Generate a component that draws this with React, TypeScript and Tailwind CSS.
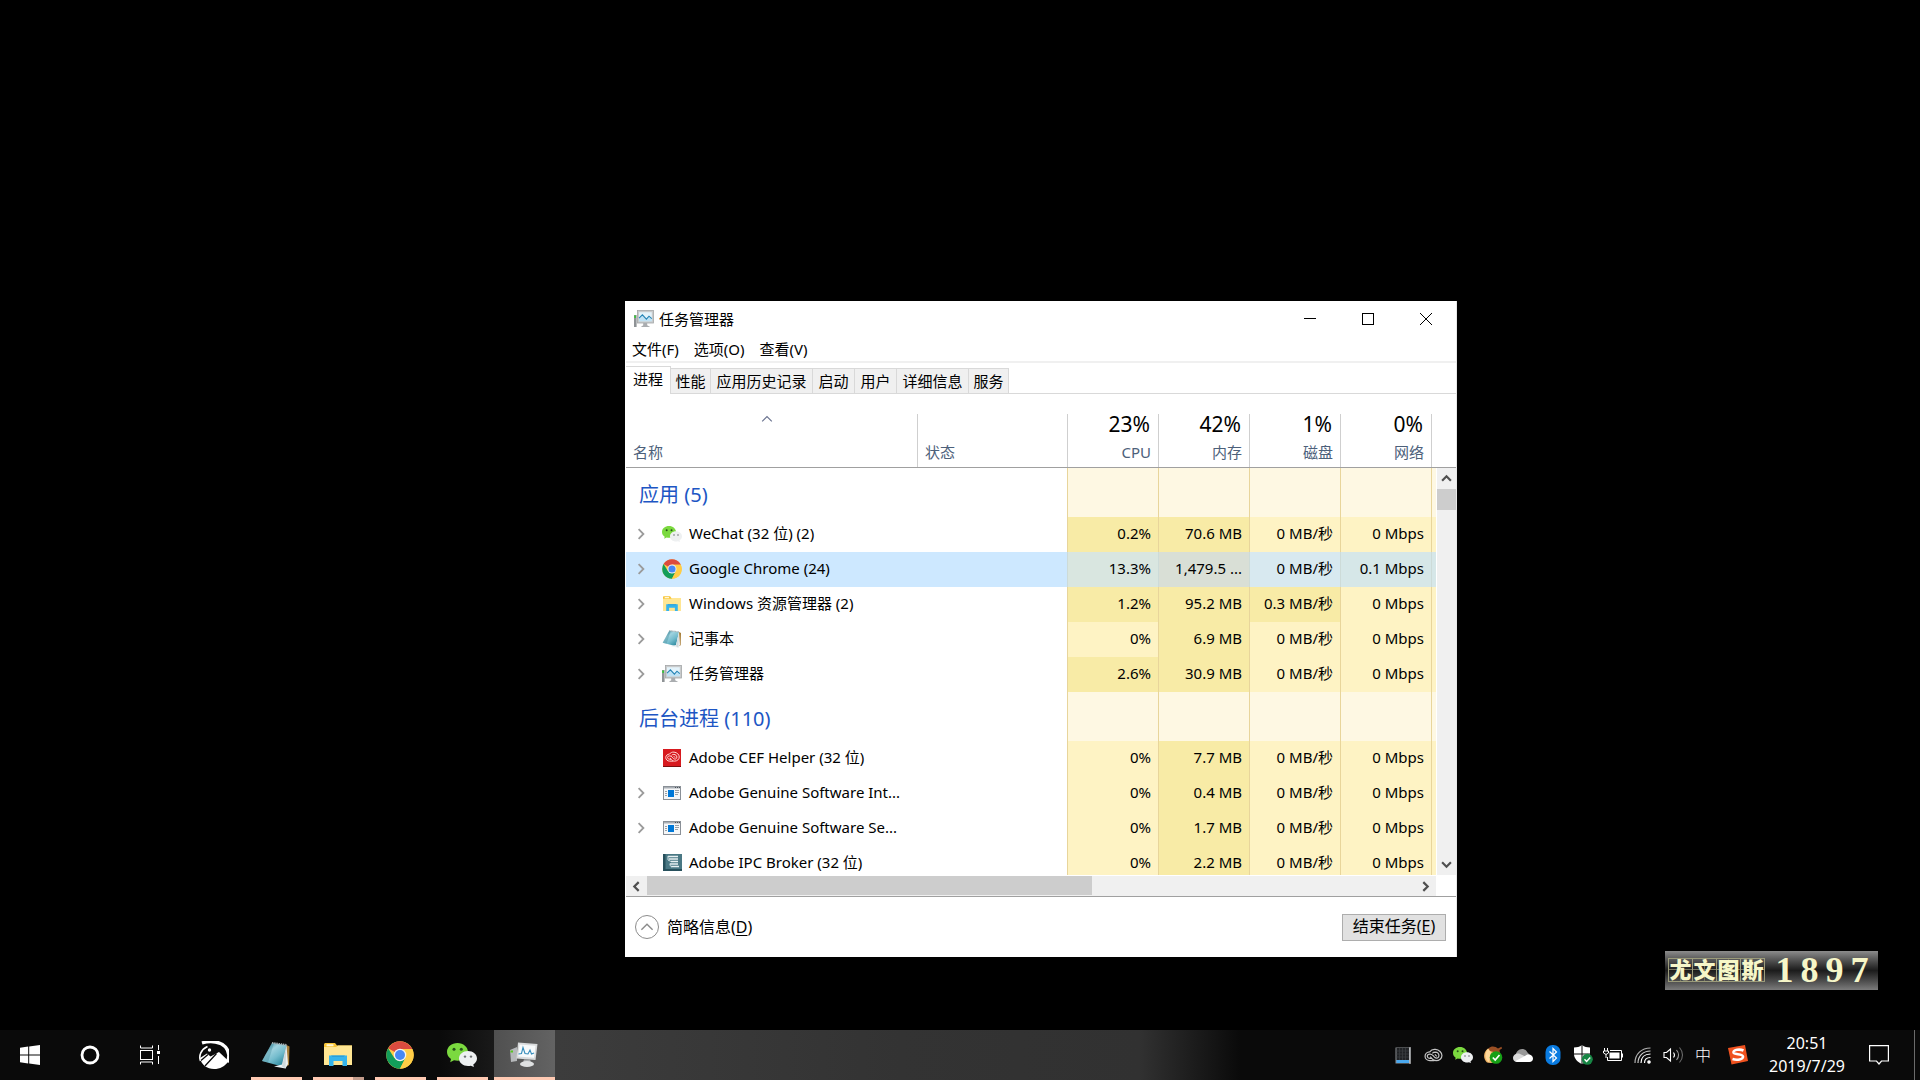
import React, { useState } from "react";

const UI_FONT = "font-['Noto_Sans','Noto_Sans_CJK_SC',sans-serif]";

type Heat = "low" | "high";

interface ProcessRow {
  name: string;
  icon: React.ReactNode;
  expandable: boolean;
  values: string[];
  heat: Heat[];
}

interface ProcessGroup {
  title: string;
  rows: ProcessRow[];
}

/* ---------- icons ---------- */

const TaskManagerIcon = ({ className }: { className?: string }) => (
  <svg viewBox="0 0 20 18" className={className} aria-hidden="true">
    <rect x="0" y="5" width="2.6" height="12" fill="#8f9396" />
    <rect x="0.2" y="5.5" width="1.8" height="2.4" fill="#39c739" />
    <rect x="3.4" y="0.5" width="16" height="12.5" fill="#c9cbcc" stroke="#a2a5a7" strokeWidth="0.8" />
    <rect x="5" y="2.2" width="12.800" height="9" fill="#e4f3fb" />
    <path d="M5 8.2 8.4 4.8 12.4 9.2 15 6.2 17.8 8.6V11.2H5Z" fill="#bfe2f5" />
    <path d="M5 8.2 8.4 4.8 12.4 9.2 15 6.2 17.8 8.6" fill="none" stroke="#2584b5" strokeWidth="1.1" />
    <path d="M9.2 13h4v2.2l3 1.9H6.8l2.4-1.9Z" fill="#aaadb0" />
  </svg>
);

const WeChatIcon = ({ className }: { className?: string }) => (
  <svg viewBox="0 0 30 24" className={className} aria-hidden="true">
    <path d="M10.5 0C4.7 0 0 3.8 0 9c0 2.900 1.500 5.300 4 7l-.8 3.200 3.800-2c1.100.3 2.300.5 3.500.5C16.300 17.700 21 14 21 9S16.300 0 10.500 0Z" fill="#7bd93f" />
    <circle cx="7" cy="6.300" r="1.500" fill="#24501a" />
    <circle cx="14.300" cy="6.300" r="1.500" fill="#24501a" />
    <path d="M21 8c-5 0-9 3.300-9 7.600s4 7.500 9 7.500c1 0 2-.1 2.900-.4l3 1.300-.6-2.600c2.300-1.400 3.700-3.500 3.700-5.800C30 11.300 26 8 21 8Z" fill="#eef0f1" />
    <circle cx="18" cy="13.600" r="1.200" fill="#6d7173" />
    <circle cx="24" cy="13.600" r="1.200" fill="#6d7173" />
  </svg>
);

const ChromeIcon = ({ className }: { className?: string }) => (
  <svg viewBox="0 0 48 48" className={className} aria-hidden="true">
    <circle cx="24" cy="24" r="23.500" fill="#ffcd46" />
    <path d="M24 24 3.650 12.250A23.500 23.500 0 0 1 44.350 12.250L45 13.500H24Z" fill="#db4b3f" />
    <path d="M3.650 12.250A23.500 23.500 0 0 0 24 47.500L33.500 29.500 24 24 14.500 29.500Z" fill="#129d5a" />
    <path d="M24 13.500h21A23.500 23.500 0 0 1 24 47.500L33.100 29.250Z" fill="#ffcd46" />
    <circle cx="24" cy="24" r="10.700" fill="#f3f4f5" />
    <circle cx="24" cy="24" r="8.600" fill="#4688f4" />
  </svg>
);

const ExplorerIcon = ({ className }: { className?: string }) => (
  <svg viewBox="0 0 28 24" className={className} aria-hidden="true">
    <path d="M0 1.500C0 .7.700 0 1.500 0h9.500l2 2.500h15V22H0Z" fill="#f8c537" />
    <rect x="2.500" y="1.200" width="7" height="2" rx="0.500" fill="#fff7d8" />
    <path d="M0 4h12l2-1.500h14V22H0Z" fill="#ffe693" />
    <path d="M5 12.500h18V23h-4.500v-5h-9v5H5Z" fill="#35b4ec" />
    <path d="M7 12.500h14l-1.500 1.500h-11Z" fill="#2b9fd9" />
  </svg>
);

const NotepadIcon = ({ className }: { className?: string }) => (
  <svg viewBox="0 0 28 27" className={className} aria-hidden="true">
    <defs>
      <linearGradient id="pad" x1="0" y1="0.100" x2="0.700" y2="1">
        <stop offset="0" stopColor="#2f8296" />
        <stop offset="0.350" stopColor="#9fd3df" />
        <stop offset="0.650" stopColor="#74bccd" />
        <stop offset="1" stopColor="#2f8ba0" />
      </linearGradient>
    </defs>
    <path d="M24.500 3 27.500 4.500 27 23l-4 2Z" fill="#a87f3a" />
    <path d="M10 1 24.500 3 20 24.500 0 19Z" fill="url(#pad)" />
    <path d="M10 1 0 19 6 20.600 12 1.300Z" fill="#3d8496" opacity="0.350" />
    <path d="M24.500 3 26 22 23.500 26.500 12 24.500 20 22.500Z" fill="#eef2f4" />
    <path d="M24.500 3 20 24.500 23.500 26.500Z" fill="#cfdadd" />
    <path d="M10 1 25 3" stroke="#a5b0b4" strokeWidth="2" strokeDasharray="1.400 0.800" />
  </svg>
);

const CreativeCloudGlyph = ({ className }: { className?: string }) => (
  <svg viewBox="0 0 20 16" className={className} fill="none" stroke="currentColor" aria-hidden="true">
    <path d="M11 13.500H6.200C3.300 13.500 1 11.400 1 8.800 1 6.200 3.200 4.200 6 4.100 7.200 2.300 9.500 1.200 12 1.500c4 .4 7 3.200 7 6.500 0 3.200-2.800 5.500-6.300 5.500-2 0-3.200-.8-4.700-2.500L6.500 9.200" strokeWidth="1.300" />
    <path d="M8.500 11H6.300C4.700 11 3.400 10 3.400 8.700c0-1.300 1.300-2.200 2.900-2.200 1.500 0 2.300.6 3.300 1.700l1.900 2c1.600 1.300 4.300.5 4.300-1.900 0-2.300-1.800-3.700-4-3.800-1.300 0-2.300.4-3 1.300" strokeWidth="1.300" />
    <path d="M13.500 9 11.500 6.700" strokeWidth="1.200" />
  </svg>
);

const AdobeCefIcon = () => (
  <span className="flex size-[18px] items-center justify-center border-b border-[#7d0e0e] bg-[#d71a1f]">
    <CreativeCloudGlyph className="h-3 w-[15px] text-[#ffd9d6]" />
  </span>
);

const GenericAppIcon = () => (
  <svg viewBox="0 0 18 14" className="h-[14px] w-[18px]" aria-hidden="true">
    <rect x="0.500" y="0.500" width="17" height="13" fill="#f6f7f8" stroke="#8a9097" />
    <rect x="1" y="1" width="16" height="1.500" fill="#a9afb5" />
    <path d="M12 1.500h1M14 1.500h1M16 1.500h1" stroke="#4c5258" />
    <rect x="5" y="4" width="6" height="7" fill="#0078d7" />
    <path d="M2 5.500h2M2 7.500h2M2 9.500h2M12 4.500h4M12 6.500h4M12 8.500h3" stroke="#9aa0a6" />
  </svg>
);

const IpcBrokerIcon = () => (
  <svg viewBox="0 0 19 17" className="h-[17px] w-[19px]" aria-hidden="true">
    <rect width="19" height="17" fill="#4a7884" />
    <rect width="2.500" height="17" fill="#27505c" />
    <rect y="15" width="19" height="2" fill="#27505c" />
    <path d="M5 2.500h10M6 5h9M8 7.500h7M7 10h8M8 12.500h8" stroke="#e7f0f2" strokeWidth="1.400" />
    <path d="M5 2v4l3 1.500M7 9.500v2l2 1.500" stroke="#cfe0e4" fill="none" />
  </svg>
);

const Chevron = ({ d, className }: { d: string; className?: string }) => (
  <svg viewBox="0 0 10 10" className={className} fill="none" stroke="currentColor" aria-hidden="true">
    <path d={d} />
  </svg>
);

const UP = "M1 7 5 3 9 7";
const DOWN = "M1 3 5 7 9 3";
const LEFT = "M7 1 3 5 7 9";
const RIGHT = "M3 1 7 5 3 9";

/* ---------- data ---------- */

const menus = ["文件(F)", "选项(O)", "查看(V)"];

const tabs = [
  { label: "性能", width: "w-10" },
  { label: "应用历史记录", width: "w-[102px]" },
  { label: "启动", width: "w-[42px]" },
  { label: "用户", width: "w-[42px]" },
  { label: "详细信息", width: "w-[72px]" },
  { label: "服务", width: "w-10" },
];

const usage = [
  { total: "23%", label: "CPU" },
  { total: "42%", label: "内存" },
  { total: "1%", label: "磁盘" },
  { total: "0%", label: "网络" },
];

const groups: ProcessGroup[] = [
  {
    title: "应用 (5)",
    rows: [
      {
        name: "WeChat (32 位) (2)",
        icon: <WeChatIcon className="h-4 w-5" />,
        expandable: true,
        values: ["0.2%", "70.6 MB", "0 MB/秒", "0 Mbps"],
        heat: ["high", "high", "low", "low"],
      },
      {
        name: "Google Chrome (24)",
        icon: <ChromeIcon className="size-5" />,
        expandable: true,
        values: ["13.3%", "1,479.5 ...", "0 MB/秒", "0.1 Mbps"],
        heat: ["high", "high", "low", "low"],
      },
      {
        name: "Windows 资源管理器 (2)",
        icon: <ExplorerIcon className="h-4 w-[18px]" />,
        expandable: true,
        values: ["1.2%", "95.2 MB", "0.3 MB/秒", "0 Mbps"],
        heat: ["high", "high", "high", "low"],
      },
      {
        name: "记事本",
        icon: <NotepadIcon className="h-[18px] w-5" />,
        expandable: true,
        values: ["0%", "6.9 MB", "0 MB/秒", "0 Mbps"],
        heat: ["low", "high", "low", "low"],
      },
      {
        name: "任务管理器",
        icon: <TaskManagerIcon className="h-[18px] w-5" />,
        expandable: true,
        values: ["2.6%", "30.9 MB", "0 MB/秒", "0 Mbps"],
        heat: ["high", "high", "low", "low"],
      },
    ],
  },
  {
    title: "后台进程 (110)",
    rows: [
      {
        name: "Adobe CEF Helper (32 位)",
        icon: <AdobeCefIcon />,
        expandable: false,
        values: ["0%", "7.7 MB", "0 MB/秒", "0 Mbps"],
        heat: ["low", "high", "low", "low"],
      },
      {
        name: "Adobe Genuine Software Int...",
        icon: <GenericAppIcon />,
        expandable: true,
        values: ["0%", "0.4 MB", "0 MB/秒", "0 Mbps"],
        heat: ["low", "high", "low", "low"],
      },
      {
        name: "Adobe Genuine Software Se...",
        icon: <GenericAppIcon />,
        expandable: true,
        values: ["0%", "1.7 MB", "0 MB/秒", "0 Mbps"],
        heat: ["low", "high", "low", "low"],
      },
      {
        name: "Adobe IPC Broker (32 位)",
        icon: <IpcBrokerIcon />,
        expandable: false,
        values: ["0%", "2.2 MB", "0 MB/秒", "0 Mbps"],
        heat: ["low", "high", "low", "low"],
      },
    ],
  },
];

const heatColors = { low: "bg-[#fef3c4]", high: "bg-[#f8eba6]" };
// tint of each column once the row is selected
const selectedColors = ["bg-[#d9e6e0]", "bg-[#d9dfd6]", "bg-[#d8e9f0]", "bg-[#d6e7e8]"];

/* ---------- process table ---------- */

function ProcessTable() {
  const [selected, setSelected] = useState("Google Chrome (24)");

  return (
    <div className="h-[481px] min-w-0 flex-1 overflow-hidden">
      <table className="w-full table-fixed border-separate border-spacing-0">
        <colgroup>
          <col />
          <col className="w-[150px]" />
          <col className="w-[91px]" />
          <col className="w-[91px]" />
          <col className="w-[91px]" />
          <col className="w-[91px]" />
          <col className="w-[5px]" />
        </colgroup>
        <thead>
          <tr className="text-[#4c607a]">
            <th className="border-b border-[#a0a0a0] p-0 pt-5 text-left font-normal">
              <div className="flex h-[53px] flex-col justify-between pb-[5px] pl-[7px]">
                <Chevron d={UP} className="-mt-px ml-32 size-3 text-[#6a7390]" />
                <span className="leading-5">名称</span>
              </div>
            </th>
            <th className="border-b border-[#a0a0a0] p-0 pt-5 text-left font-normal">
              <div className="flex h-[53px] flex-col justify-end border-l border-[#cfcfcf] pb-[5px] pl-[7px]">
                <span className="leading-5">状态</span>
              </div>
            </th>
            {usage.map((u) => (
              <th key={u.label} className="border-b border-[#a0a0a0] p-0 pt-5 text-right font-normal">
                <div className="flex h-[53px] flex-col justify-between border-l border-[#cfcfcf] pr-[7px] pb-[5px]">
                  <span className="pr-px text-[21px] leading-5 text-black">{u.total}</span>
                  <span className="leading-5">{u.label}</span>
                </div>
              </th>
            ))}
            <td className="border-b border-[#a0a0a0] p-0 pt-5">
              <div className="h-[53px] border-l border-[#cfcfcf]" />
            </td>
          </tr>
        </thead>
        {groups.map((group) => (
          <tbody key={group.title}>
            <tr className="h-[49px]">
              <th colSpan={2} className="p-0 pt-1 pl-[13px] text-left text-[20px] leading-7 font-normal text-[#1d56c4]">
                {group.title}
              </th>
              {[0, 1, 2, 3, 4].map((i) => (
                <td key={i} className="border-l border-[#e8d59b] bg-[#fef8e3] p-0" />
              ))}
            </tr>
            {group.rows.map((row) => {
              const isSelected = row.name === selected;
              return (
                <tr
                  key={row.name}
                  onClick={() => setSelected(row.name)}
                  className={isSelected ? "h-[35px] bg-[#cde8ff]" : "h-[35px]"}
                >
                  <td colSpan={2} className="p-0 pb-0.5">
                    <div className="flex items-center whitespace-nowrap">
                      <span className="flex w-9 pl-[9px]">
                        {row.expandable && (
                          <button type="button" aria-label="展开" className="text-[#9b9b9b]">
                            <Chevron d={RIGHT} className="size-3 stroke-[1.5]" />
                          </button>
                        )}
                      </span>
                      <span className="mr-[7px] flex w-5 justify-center">{row.icon}</span>
                      {row.name}
                    </div>
                  </td>
                  {row.values.map((value, i) => (
                    <td
                      key={i}
                      className={`border-l p-0 pr-[7px] pb-0.5 text-right whitespace-nowrap ${
                        isSelected
                          ? `border-[#cddbd8] ${selectedColors[i]}`
                          : `border-[#e8d59b] ${heatColors[row.heat[i]]}`
                      }`}
                    >
                      {value}
                    </td>
                  ))}
                  <td
                    className={
                      isSelected
                        ? "border-l border-[#cddbd8] bg-[#d6e7e8] p-0"
                        : "border-l border-[#e8d59b] bg-[#fef3c4] p-0"
                    }
                  />
                </tr>
              );
            })}
          </tbody>
        ))}
      </table>
    </div>
  );
}

function TaskManagerWindow() {
  return (
    <main className="absolute top-[301px] left-[625px] flex w-[832px] flex-col border-x border-white border-r-[#e8e8e8] bg-white text-[15px] text-black">
      <header className="flex h-9 items-center pr-px pl-2">
        <TaskManagerIcon className="h-[18px] w-5" />
        <h1 className="ml-[5px]">任务管理器</h1>
        <div className="ml-auto flex self-stretch">
          <button type="button" aria-label="最小化" className="flex w-[58px] items-center justify-center">
            <svg viewBox="0 0 12 12" className="size-3" stroke="black">
              <path d="M0 5.500H12" />
            </svg>
          </button>
          <button type="button" aria-label="最大化" className="flex w-[58px] items-center justify-center">
            <svg viewBox="0 0 12 12" className="size-3" stroke="black" fill="none">
              <rect x="0.500" y="0.500" width="11" height="11" />
            </svg>
          </button>
          <button type="button" aria-label="关闭" className="flex w-[58px] items-center justify-center">
            <svg viewBox="0 0 12 12" className="size-3" stroke="black">
              <path d="M0 0 12 12M12 0 0 12" />
            </svg>
          </button>
        </div>
      </header>

      <nav className="flex h-[26px] items-center gap-[15px] border-b-2 border-[#f0f0f0] pl-[6px]">
        {menus.map((m) => (
          <button type="button" key={m}>
            {m}
          </button>
        ))}
      </nav>

      <div role="tablist" className="flex h-[31px] items-end border-b border-[#d9d9d9] whitespace-nowrap">
        <button
          type="button"
          role="tab"
          aria-selected="true"
          className="-mb-px h-7 w-[45px] border-t border-r border-[#d9d9d9] bg-white pb-[3px]"
        >
          进程
        </button>
        {tabs.map((t) => (
          <button
            type="button"
            role="tab"
            aria-selected="false"
            key={t.label}
            className={`h-[25px] border-t border-r border-[#d9d9d9] bg-[#f0f0f0] ${t.width}`}
          >
            {t.label}
          </button>
        ))}
      </div>

      <div className="flex">
        <ProcessTable />
        <div className="flex w-5 flex-col">
          <div className="h-[74px] border-b border-[#a0a0a0]" />
          <div className="ml-px flex flex-1 flex-col bg-[#f0f0f0] text-[#505050]">
            <button type="button" aria-label="向上滚动" className="flex h-[21px] items-center justify-center">
              <Chevron d={UP} className="size-[11px] stroke-2" />
            </button>
            <div className="h-[21px] bg-[#cdcdcd]" />
            <button type="button" aria-label="向下滚动" className="mt-auto flex h-[21px] items-center justify-center">
              <Chevron d={DOWN} className="size-[11px] stroke-2" />
            </button>
          </div>
        </div>
      </div>

      <div className="mt-px border-b border-[#a0a0a0] pr-5">
        <div className="flex h-5 bg-[#f0f0f0] text-[#505050]">
          <button type="button" aria-label="向左滚动" className="flex w-[21px] items-center justify-center">
            <Chevron d={LEFT} className="size-[11px] stroke-2" />
          </button>
          <div className="h-[19px] w-[445px] bg-[#cdcdcd]" />
          <button type="button" aria-label="向右滚动" className="ml-auto flex w-[21px] items-center justify-center">
            <Chevron d={RIGHT} className="size-[11px] stroke-2" />
          </button>
        </div>
      </div>

      <footer className="flex h-[60px] items-center justify-between pr-[10px] pl-[9px] text-[16px]">
        <button type="button" className="flex items-center gap-2">
          <span className="flex size-6 items-center justify-center rounded-full border border-[#8c8c8c]">
            <Chevron d={UP} className="size-[14px] text-[#8c8c8c]" />
          </span>
          <span>
            简略信息(<u className="underline-offset-2">D</u>)
          </span>
        </button>
        <button type="button" className="h-[27px] w-[104px] border border-[#adadad] bg-[#e1e1e1] pb-0.5 leading-5">
          结束任务(<u className="underline-offset-2">E</u>)
        </button>
      </footer>
    </main>
  );
}

/* ---------- desktop badge ---------- */

function ClubBadge() {
  return (
    <div className="absolute top-[951px] left-[1665px] flex h-[39px] w-[213px] items-center bg-linear-to-b from-[#8c8c8c] via-[#1c1c1c] to-[#7c7c7c] pb-0.5 pl-[3px] text-[#f6f6c8]">
      <div className="flex border-l border-[#9b9b7a] font-['Noto_Sans_CJK_SC',sans-serif] text-[22px] font-black">
        {["尤", "文", "图", "斯"].map((c) => (
          <span
            key={c}
            className="flex size-6 items-center justify-center border-y border-r border-[#9b9b7a] bg-[linear-gradient(#77775f,#77775f),linear-gradient(#77775f,#77775f)] bg-[length:1px_100%,100%_1px] bg-center bg-no-repeat pb-1 leading-none"
          >
            {c}
          </span>
        ))}
      </div>
      <div className="ml-[7px] flex font-['Liberation_Serif',serif] text-[36px] leading-none font-bold">
        {["1", "8", "9", "7"].map((n) => (
          <span key={n} className="w-[25px] text-center">
            {n}
          </span>
        ))}
      </div>
    </div>
  );
}

/* ---------- taskbar ---------- */

const pinned = [
  { name: "记事本", icon: <NotepadIcon className="h-[27px] w-7" /> },
  { name: "文件资源管理器", icon: <ExplorerIcon className="h-6 w-7" />, stacked: true },
  { name: "Google Chrome", icon: <ChromeIcon className="size-7" /> },
  { name: "WeChat", icon: <WeChatIcon className="h-6 w-[30px]" /> },
];

const trayIcons = [
  {
    name: "设备",
    icon: (
      <svg viewBox="0 0 16 17" className="h-[17px] w-4">
        <rect x="0.500" y="0.500" width="15" height="16" fill="#8b8f93" />
        <rect x="1.500" y="1" width="12.500" height="12" fill="#202225" />
        <path d="M4.500 1v12M7.500 1v12M10.500 1v12M1.500 4h12.500M1.500 7h12.500M1.500 10h12.500" stroke="#3d4043" strokeWidth="0.700" />
        <rect x="1.500" y="13" width="12.500" height="3" fill="#4aa8ee" />
        <path d="M15 0v17" stroke="#d6d8da" />
      </svg>
    ),
  },
  { name: "Creative Cloud", icon: <CreativeCloudGlyph className="h-[15px] w-[19px] text-[#c4c4c4]" /> },
  { name: "微信", icon: <WeChatIcon className="h-4 w-5" /> },
  {
    name: "同步",
    icon: (
      <svg viewBox="0 0 20 18" className="h-[18px] w-5">
        <path d="M5 2.500C0 6 0 13 4 16.500c5 1.500 10-.5 12-4.500L14 4Z" fill="#f2b768" />
        <path d="M5 3C1.500 7 1.500 13 6 16.500L8 6Z" fill="#ffd99a" />
        <path d="M5.500 2.500c3-3 7-2 9.500 0L18.500.8 19 2.500l-2.500 1.500.5 3-5-.5L7 5Z" fill="#9a4f24" />
        <circle cx="13" cy="11.500" r="6.300" fill="#16a016" />
        <path d="M9.800 11.500 12.200 14 16.500 9" fill="none" stroke="white" strokeWidth="1.700" />
      </svg>
    ),
  },
  {
    name: "OneDrive",
    icon: (
      <svg viewBox="0 0 20 13" className="h-[13px] w-5">
        <path d="M3 8C2 4 5 0 9 0c3 0 4.500 1.500 5.500 3.500L17 6 9 12Z" fill="#989898" />
        <path d="M0 9c0-3 3-5 6-4.500L16 9l-2 4H4C1.500 13 0 11 0 9Z" fill="#dadada" />
        <path d="M2.500 12 12 7c2-3 8-1.500 8 2.500 0 2-1.500 3.500-3.500 3.500H4Z" fill="#ffffff" />
      </svg>
    ),
  },
  {
    name: "蓝牙",
    icon: (
      <svg viewBox="0 0 16 20" className="h-5 w-4">
        <rect x="0.500" width="15" height="20" rx="7" fill="#0a7be0" />
        <path d="M4.500 6.500 11.500 13 8 16.500v-13L11.500 7 4.500 13.500" fill="none" stroke="white" strokeWidth="1.200" />
      </svg>
    ),
  },
  {
    name: "安全中心",
    icon: (
      <svg viewBox="0 0 20 20" className="size-5">
        <path d="M9 0c2.500 1.800 5 2.500 8 2.500V9c0 4.500-3.500 8-8 10-4.500-2-8-5.500-8-10V2.500C4 2.500 6.500 1.800 9 0Z" fill="white" />
        <path d="M9 0v19M1 9h16" stroke="#0b0b0b" />
        <circle cx="14.300" cy="14.300" r="5.500" fill="#178544" />
        <path d="M11.500 14.300 13.600 16.400 17.200 12.500" fill="none" stroke="white" strokeWidth="1.400" />
      </svg>
    ),
  },
  {
    name: "电池",
    icon: (
      <svg viewBox="0 0 20 15" className="h-[15px] w-5" fill="none" stroke="white">
        <path d="M7 2.500h11.500v10H4.500V9" />
        <rect x="19" y="5.500" width="1" height="4" fill="white" stroke="none" />
        <rect x="6.500" y="4.500" width="10" height="6" fill="white" stroke="none" />
        <path d="M1.500 0v3M4.500 0v3M0.500 3h5v2L3 6.500.500 5ZM3 6.500V10" />
      </svg>
    ),
  },
  {
    name: "网络",
    icon: (
      <svg viewBox="0 0 18 17" className="h-[17px] w-[18px]" fill="none" stroke="white" strokeWidth="1.200">
        <circle cx="15" cy="15" r="1.200" fill="white" />
        <path d="M10.500 16C10.500 12.500 12.500 10.500 16.500 10.500" />
        <path d="M7 16C7 10.500 10.500 7 16.500 7" />
        <path d="M4 16C4 9 9 4 16.500 4" stroke="#cfcfcf" />
        <path d="M1 16C1 7 7.500 1 16.500 1" stroke="#b0b0b0" />
      </svg>
    ),
  },
  {
    name: "音量",
    icon: (
      <svg viewBox="0 0 21 18" className="h-[18px] w-[21px]" fill="none" stroke="white" strokeWidth="1.100">
        <path d="M1 6.500h2.500L7.500 3v12L3.500 11.500H1Z" />
        <path d="M10.500 6.500c1.200 1.500 1.200 3.500 0 5" />
        <path d="M13.500 4c2.500 3 2.500 7 0 10" stroke="#9a9a9a" />
        <path d="M16.500 1.500c4 4.500 4 10.500 0 15" stroke="#6a6a6a" />
      </svg>
    ),
  },
  { name: "输入法", icon: <span className="text-[16px] font-light">中</span> },
];

function Taskbar() {
  return (
    <footer className="flex h-[50px] bg-[linear-gradient(to_right,#0a0a0a_440px,#191919_494px,#3c3c3c_556px,#333333_900px,#313131_1140px,#0a0a0a_1240px)] text-white">
      <button type="button" aria-label="开始" className="flex w-[60px] items-center justify-center">
        <svg viewBox="0 0 20 20" className="size-5" fill="white">
          <path d="M0 2.800 8.200 1.600V9.500H0ZM9.200 1.400 20 0V9.500H9.200ZM0 10.500H8.200V18.400L0 17.300ZM9.200 10.500H20V20L9.200 18.600Z" />
        </svg>
      </button>
      <button type="button" aria-label="Cortana" className="flex w-[60px] items-center justify-center">
        <svg viewBox="0 0 20 20" className="size-5" fill="none" stroke="white" strokeWidth="2.800">
          <circle cx="10" cy="10" r="8" />
        </svg>
      </button>
      <button type="button" aria-label="任务视图" className="mr-[3px] flex w-[60px] items-center justify-center">
        <svg viewBox="0 0 20 20" className="size-5" fill="none" stroke="white">
          <rect x="0.500" y="5.500" width="12" height="9" />
          <path d="M0.500 0.500V3H12.500V0.500M0.500 19.500V17H12.500V19.500M18.500 0V5M18.500 11V19" />
          <rect x="17" y="6" width="3" height="3" fill="white" stroke="none" />
        </svg>
      </button>
      <button type="button" aria-label="看图" className="flex w-[62px] items-center justify-center">
        <svg viewBox="0 0 30 28" className="h-7 w-[30px]">
          {/* outer ring with the swoosh on top */}
          <path d="M3 2C12-.8 22 .8 26.500 6 30.500 11 30.800 17 28 21" fill="none" stroke="white" strokeWidth="3.400" />
          <path d="M8.500 5.500C2 8.500-.5 14.500 1.500 20" fill="none" stroke="white" strokeWidth="1.600" />
          <path d="M1 17 8 12.500 11.500 15.500 20 11 29.500 20C26 25.500 21 28 15 28 8 28 2.500 24 1 17Z" fill="white" />
          <path d="M6 25 17.500 12.500M2 19.500 9 13.500" stroke="#0a0a0a" strokeWidth="1.300" />
          <circle cx="10.500" cy="9" r="1.700" fill="white" />
        </svg>
      </button>

      {pinned.map((p) => (
        <button type="button" key={p.name} aria-label={p.name} className="flex w-[62px] flex-col items-center">
          <span className="flex flex-1 items-center pt-[3px]">{p.icon}</span>
          <span className="flex h-[3px] w-[51px] bg-[#ffcab3]">
            {p.stacked && <span className="ml-auto h-[3px] w-[11px] bg-[#c39c8c]" />}
          </span>
        </button>
      ))}

      <button type="button" aria-label="任务管理器" className="ml-px flex w-[61px] flex-col items-center bg-linear-to-r from-[#505050] to-[#636363]">
        <span className="flex flex-1 items-center pt-[3px] pr-0.5">
          <svg viewBox="0 0 28 26" className="h-[26px] w-7">
            <path d="M0 8 7 5v14l-6 1Z" fill="#b5b8ba" />
            <rect x="0.500" y="8.500" width="2.500" height="2" fill="#58c322" />
            <path d="M8 .500 27.500 2 25.500 18 6.500 16.500Z" fill="#d9dbdc" />
            <path d="M9.500 2.500 25.500 3.700 24 15.800 8.300 14.600Z" fill="#f7fafb" />
            <path d="M8.500 12 11.500 11.500 13 5.500 15 11.500 18 12 20 8 21.500 12 24 11" fill="none" stroke="#358cbb" strokeWidth="1.100" />
            <path d="M14 17.500h6l1 3H13Z" fill="#a8abad" />
            <ellipse cx="17" cy="22" rx="7" ry="3" fill="#dfe1e2" />
          </svg>
        </span>
        <span className="h-[3px] w-full bg-[#ffcab3]" />
      </button>

      <div className="ml-auto flex">
        {trayIcons.map((t) => (
          <button type="button" key={t.name} aria-label={t.name} className="flex w-[30px] items-center justify-center">
            {t.icon}
          </button>
        ))}
        <button type="button" aria-label="搜狗输入法" className="flex w-[39px] items-center justify-center">
          <svg viewBox="0 0 20 20" className="size-5">
            <path d="M0 3 17 0 20 16 3.500 19.500Z" fill="#f0521f" />
            <path d="M15.500 5.500C12 4 5 4.500 5.500 7.500 6 10 14.500 8.500 15 11.500 15.300 14.500 9 15.500 4.500 14" fill="none" stroke="white" strokeWidth="2.600" />
          </svg>
        </button>
        <button type="button" className="flex w-[100px] flex-col items-center justify-center text-[16px] leading-[23px]">
          <span>20:51</span>
          <span>2019/7/29</span>
        </button>
        <button type="button" aria-label="通知" className="mr-[13px] flex w-11 items-center justify-center">
          <svg viewBox="0 0 20 20" className="size-5" fill="none" stroke="white" strokeWidth="1.200">
            <path d="M0.600 0.600H19.400V16H12.500L10 19 7.500 16H0.600Z" />
          </svg>
        </button>
        <button type="button" aria-label="显示桌面" className="w-[6px] border-l border-[#6b6b6b]" />
      </div>
    </footer>
  );
}

export default function App() {
  return (
    <div className={`relative flex h-screen flex-col justify-end overflow-hidden bg-black ${UI_FONT}`}>
      <TaskManagerWindow />
      <ClubBadge />
      <Taskbar />
    </div>
  );
}
